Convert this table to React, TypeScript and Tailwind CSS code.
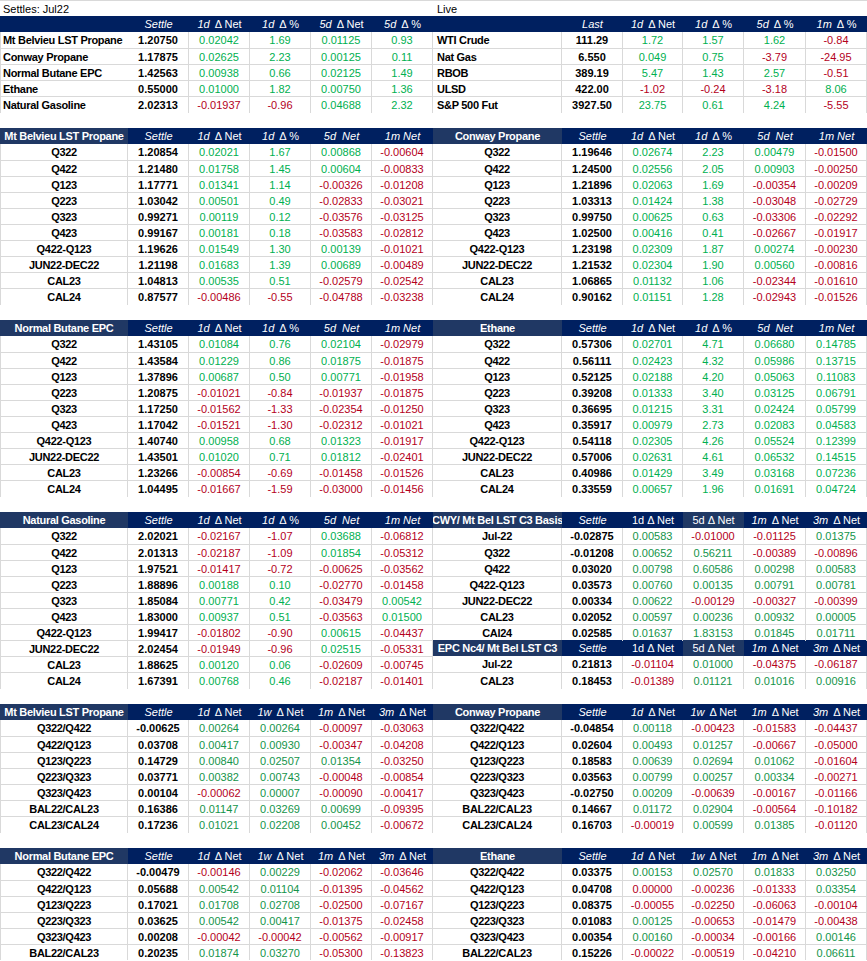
import React from 'react';

type Head = { n: React.ReactNode; light?: boolean };
type Side = 'L' | 'R';

const GRID: Record<Side, string> = {
  L: 'grid-cols-[128px_61px_61px_61px_61px_61px]',
  R: 'grid-cols-[129px_61px_60px_61px_62px_61px]',
};

function d(a: string, b: string): Head {
  return { n: (<><i>{a}</i><span className="ml-[5px]">{b}</span></>) };
}
function it(a: string): Head {
  return { n: <i>{a}</i> };
}

const topL: Head[] = [it('Settle'), d('1d', 'Δ Net'), d('1d', 'Δ %'), d('5d', 'Δ Net'), d('5d', 'Δ %')];
const topR: Head[] = [it('Last'), d('1d', 'Δ Net'), d('1d', 'Δ %'), d('5d', 'Δ %'), d('1m', 'Δ %')];
const mid: Head[] = [it('Settle'), d('1d', 'Δ Net'), d('1d', 'Δ %'), it('5d  Net'), it('1m Net')];
const spr: Head[] = [it('Settle'), d('1d', 'Δ Net'), d('1w', 'Δ Net'), d('1m', 'Δ Net'), d('3m', 'Δ Net')];
const basis: Head[] = [
  it('Settle'),
  { n: '1d Δ Net' },
  { n: '5d Δ Net', light: true },
  d('1m', 'Δ Net'),
  d('3m', 'Δ Net'),
];

const rows = (s: string) => s.trim().split('\n').map((l) => l.trim().split('|'));

const topLeftRows = rows(`
Mt Belvieu LST Propane|1.20750|0.02042|1.69|0.01125|0.93
Conway Propane|1.17875|0.02625|2.23|0.00125|0.11
Normal Butane EPC|1.42563|0.00938|0.66|0.02125|1.49
Ethane|0.55000|0.01000|1.82|0.00750|1.36
Natural Gasoline|2.02313|-0.01937|-0.96|0.04688|2.32`);

const topRightRows = rows(`
WTI Crude|111.29|1.72|1.57|1.62|-0.84
Nat Gas|6.550|0.049|0.75|-3.79|-24.95
RBOB|389.19|5.47|1.43|2.57|-0.51
ULSD|422.00|-1.02|-0.24|-3.18|8.06
S&P 500 Fut|3927.50|23.75|0.61|4.24|-5.55`);

const mtb = rows(`
Q322|1.20854|0.02021|1.67|0.00868|-0.00604
Q422|1.21480|0.01758|1.45|0.00604|-0.00833
Q123|1.17771|0.01341|1.14|-0.00326|-0.01208
Q223|1.03042|0.00501|0.49|-0.02833|-0.03021
Q323|0.99271|0.00119|0.12|-0.03576|-0.03125
Q423|0.99167|0.00181|0.18|-0.03583|-0.02812
Q422-Q123|1.19626|0.01549|1.30|0.00139|-0.01021
JUN22-DEC22|1.21198|0.01683|1.39|0.00689|-0.00489
CAL23|1.04813|0.00535|0.51|-0.02579|-0.02542
CAL24|0.87577|-0.00486|-0.55|-0.04788|-0.03238`);

const conway = rows(`
Q322|1.19646|0.02674|2.23|0.00479|-0.01500
Q422|1.24500|0.02556|2.05|0.00903|-0.00250
Q123|1.21896|0.02063|1.69|-0.00354|-0.00209
Q223|1.03313|0.01424|1.38|-0.03048|-0.02729
Q323|0.99750|0.00625|0.63|-0.03306|-0.02292
Q423|1.02500|0.00416|0.41|-0.02667|-0.01917
Q422-Q123|1.23198|0.02309|1.87|0.00274|-0.00230
JUN22-DEC22|1.21532|0.02304|1.90|0.00560|-0.00816
CAL23|1.06865|0.01132|1.06|-0.02344|-0.01610
CAL24|0.90162|0.01151|1.28|-0.02943|-0.01526`);

const butane = rows(`
Q322|1.43105|0.01084|0.76|0.02104|-0.02979
Q422|1.43584|0.01229|0.86|0.01875|-0.01875
Q123|1.37896|0.00687|0.50|0.00771|-0.01958
Q223|1.20875|-0.01021|-0.84|-0.01937|-0.01875
Q323|1.17250|-0.01562|-1.33|-0.02354|-0.01250
Q423|1.17042|-0.01521|-1.30|-0.02312|-0.01021
Q422-Q123|1.40740|0.00958|0.68|0.01323|-0.01917
JUN22-DEC22|1.43501|0.01020|0.71|0.01812|-0.02401
CAL23|1.23266|-0.00854|-0.69|-0.01458|-0.01526
CAL24|1.04495|-0.01667|-1.59|-0.03000|-0.01456`);

const ethane = rows(`
Q322|0.57306|0.02701|4.71|0.06680|0.14785
Q422|0.56111|0.02423|4.32|0.05986|0.13715
Q123|0.52125|0.02188|4.20|0.05063|0.11083
Q223|0.39208|0.01333|3.40|0.03125|0.06791
Q323|0.36695|0.01215|3.31|0.02424|0.05799
Q423|0.35917|0.00979|2.73|0.02083|0.04583
Q422-Q123|0.54118|0.02305|4.26|0.05524|0.12399
JUN22-DEC22|0.57006|0.02631|4.61|0.06532|0.14515
CAL23|0.40986|0.01429|3.49|0.03168|0.07236
CAL24|0.33559|0.00657|1.96|0.01691|0.04724`);

const natgas = rows(`
Q322|2.02021|-0.02167|-1.07|0.03688|-0.06812
Q422|2.01313|-0.02187|-1.09|0.01854|-0.05312
Q123|1.97521|-0.01417|-0.72|-0.00625|-0.03562
Q223|1.88896|0.00188|0.10|-0.02770|-0.01458
Q323|1.85084|0.00771|0.42|-0.03479|0.00542
Q423|1.83000|0.00937|0.51|-0.03563|0.01500
Q422-Q123|1.99417|-0.01802|-0.90|0.00615|-0.04437
JUN22-DEC22|2.02454|-0.01949|-0.96|0.02515|-0.05331
CAL23|1.88625|0.00120|0.06|-0.02609|-0.00745
CAL24|1.67391|0.00768|0.46|-0.02187|-0.01401`);

const cwy = rows(`
Jul-22|-0.02875|0.00583|-0.01000|-0.01125|0.01375
Q322|-0.01208|0.00652|0.56211|-0.00389|-0.00896
Q422|0.03020|0.00798|0.60586|0.00298|0.00583
Q422-Q123|0.03573|0.00760|0.00135|0.00791|0.00781
JUN22-DEC22|0.00334|0.00622|-0.00129|-0.00327|-0.00399
CAL23|0.02052|0.00597|0.00236|0.00932|0.00005
CAl24|0.02585|0.01637|1.83153|0.01845|0.01711`);

const epc = rows(`
Jul-22|0.21813|-0.01104|0.01000|-0.04375|-0.06187
CAL23|0.18453|-0.01389|0.01121|0.01016|0.00916`);

const mtbSpr = rows(`
Q322/Q422|-0.00625|0.00264|0.00264|-0.00097|-0.03063
Q422/Q123|0.03708|0.00417|0.00930|-0.00347|-0.04208
Q123/Q223|0.14729|0.00840|0.02507|0.01354|-0.03250
Q223/Q323|0.03771|0.00382|0.00743|-0.00048|-0.00854
Q323/Q423|0.00104|-0.00062|0.00007|-0.00090|-0.00417
BAL22/CAL23|0.16386|0.01147|0.03269|0.00699|-0.09395
CAL23/CAL24|0.17236|0.01021|0.02208|0.00452|-0.00672`);

const conwaySpr = rows(`
Q322/Q422|-0.04854|0.00118|-0.00423|-0.01583|-0.04437
Q422/Q123|0.02604|0.00493|0.01257|-0.00667|-0.05000
Q123/Q223|0.18583|0.00639|0.02694|0.01062|-0.01604
Q223/Q323|0.03563|0.00799|0.00257|0.00334|-0.00271
Q323/Q423|-0.02750|0.00209|-0.00639|-0.00167|-0.01166
BAL22/CAL23|0.14667|0.01172|0.02904|-0.00564|-0.10182
CAL23/CAL24|0.16703|-0.00019|0.00599|0.01385|-0.01120`);

const butaneSpr = rows(`
Q322/Q422|-0.00479|-0.00146|0.00229|-0.02062|-0.03646
Q422/Q123|0.05688|0.00542|0.01104|-0.01395|-0.04562
Q123/Q223|0.17021|0.01708|0.02708|-0.02500|-0.07167
Q223/Q323|0.03625|0.00542|0.00417|-0.01375|-0.02458
Q323/Q423|0.00208|-0.00042|-0.00042|-0.00562|-0.00917
BAL22/CAL23|0.20235|0.01874|0.03270|-0.05300|-0.13823`);

const ethaneSpr = rows(`
Q322/Q422|0.03375|0.00153|0.02570|0.01833|0.03250
Q422/Q123|0.04708|0.00000|-0.00236|-0.01333|0.03354
Q123/Q223|0.08375|-0.00055|-0.02250|-0.06063|-0.00104
Q223/Q323|0.01083|0.00125|-0.00653|-0.01479|-0.00438
Q323/Q423|0.00354|0.00160|-0.00034|-0.00166|0.00146
BAL22/CAL23|0.15226|-0.00022|-0.00519|-0.04210|0.06611`);

function tone(v: string, dark: boolean) {
  if (v.startsWith('-') || v === '0.00000') return 'text-[#b4001c]';
  return dark ? 'text-[#14944a]' : 'text-[#00b050]';
}

function Block({
  side,
  title,
  heads,
  data,
  dark = false,
  top = false,
}: {
  side: Side;
  title: string;
  heads: Head[];
  data: string[][];
  dark?: boolean;
  top?: boolean;
}) {
  const grid = GRID[side];
  return (
    <div>
      <div className={`grid ${grid} h-4 bg-[#002060] text-white`}>
        <div
          className={`flex items-center justify-center overflow-hidden whitespace-nowrap font-bold tracking-[-0.3px] ${
            top ? '' : 'bg-[#203864]'
          }`}
        >
          {top ? '' : title}
        </div>
        {heads.map((h, i) => (
          <div
            key={i}
            className={`flex items-center justify-center whitespace-pre ${h.light ? 'bg-[#1f3864]' : ''}`}
          >
            {h.n}
          </div>
        ))}
      </div>
      {data.map((r, i) => (
        <div key={i} className={`grid ${grid} h-4 ${i ? 'border-t border-[#d9d9d9]' : ''}`}>
          <div
            className={`flex items-center overflow-visible whitespace-nowrap font-bold tracking-[-0.3px] text-black ${
              top
                ? side === 'L'
                  ? 'border-l border-[#d9d9d9] pl-[2px]'
                  : 'border-r border-[#d9d9d9] pl-1'
                : `justify-center border-r border-[#d9d9d9] ${side === 'L' ? 'border-l' : ''}`
            }`}
          >
            {r[0]}
          </div>
          <div className="flex items-center justify-center border-r border-[#d9d9d9] font-bold text-black">
            {r[1]}
          </div>
          {r.slice(2).map((v, j) => (
            <div
              key={j}
              className={`flex items-center justify-center border-r border-[#d9d9d9] ${tone(v, dark)}`}
            >
              {v}
            </div>
          ))}
        </div>
      ))}
    </div>
  );
}

function Gap() {
  return <div className="h-4" />;
}

export default function App() {
  return (
    <div
      className="w-[867px] bg-white text-[11px] leading-4 text-black"
      style={{ fontFamily: '"Liberation Sans", Arial, sans-serif' }}
    >
      <div className="flex h-4 border-t border-[#d9d9d9]">
        <div className="w-[433px] pl-[3px]">Settles: Jul22</div>
        <div className="pl-1">Live</div>
      </div>
      <div className="flex">
        <div className="w-[433px]">
          <Block side="L" top title="" heads={topL} data={topLeftRows} />
          <Gap />
          <Block side="L" title="Mt Belvieu LST Propane" heads={mid} data={mtb} />
          <Gap />
          <Block side="L" title="Normal Butane EPC" heads={mid} data={butane} />
          <Gap />
          <Block side="L" title="Natural Gasoline" heads={mid} data={natgas} />
          <Gap />
          <Block side="L" dark title="Mt Belvieu LST Propane" heads={spr} data={mtbSpr} />
          <Gap />
          <Block side="L" dark title="Normal Butane EPC" heads={spr} data={butaneSpr} />
        </div>
        <div className="w-[434px]">
          <Block side="R" top title="" heads={topR} data={topRightRows} />
          <Gap />
          <Block side="R" title="Conway Propane" heads={mid} data={conway} />
          <Gap />
          <Block side="R" title="Ethane" heads={mid} data={ethane} />
          <Gap />
          <Block side="R" dark title="CWY/ Mt Bel LST C3 Basis" heads={basis} data={cwy} />
          <Block side="R" dark title="EPC Nc4/ Mt Bel LST C3" heads={basis} data={epc} />
          <Gap />
          <Block side="R" dark title="Conway Propane" heads={spr} data={conwaySpr} />
          <Gap />
          <Block side="R" dark title="Ethane" heads={spr} data={ethaneSpr} />
        </div>
      </div>
    </div>
  );
}
